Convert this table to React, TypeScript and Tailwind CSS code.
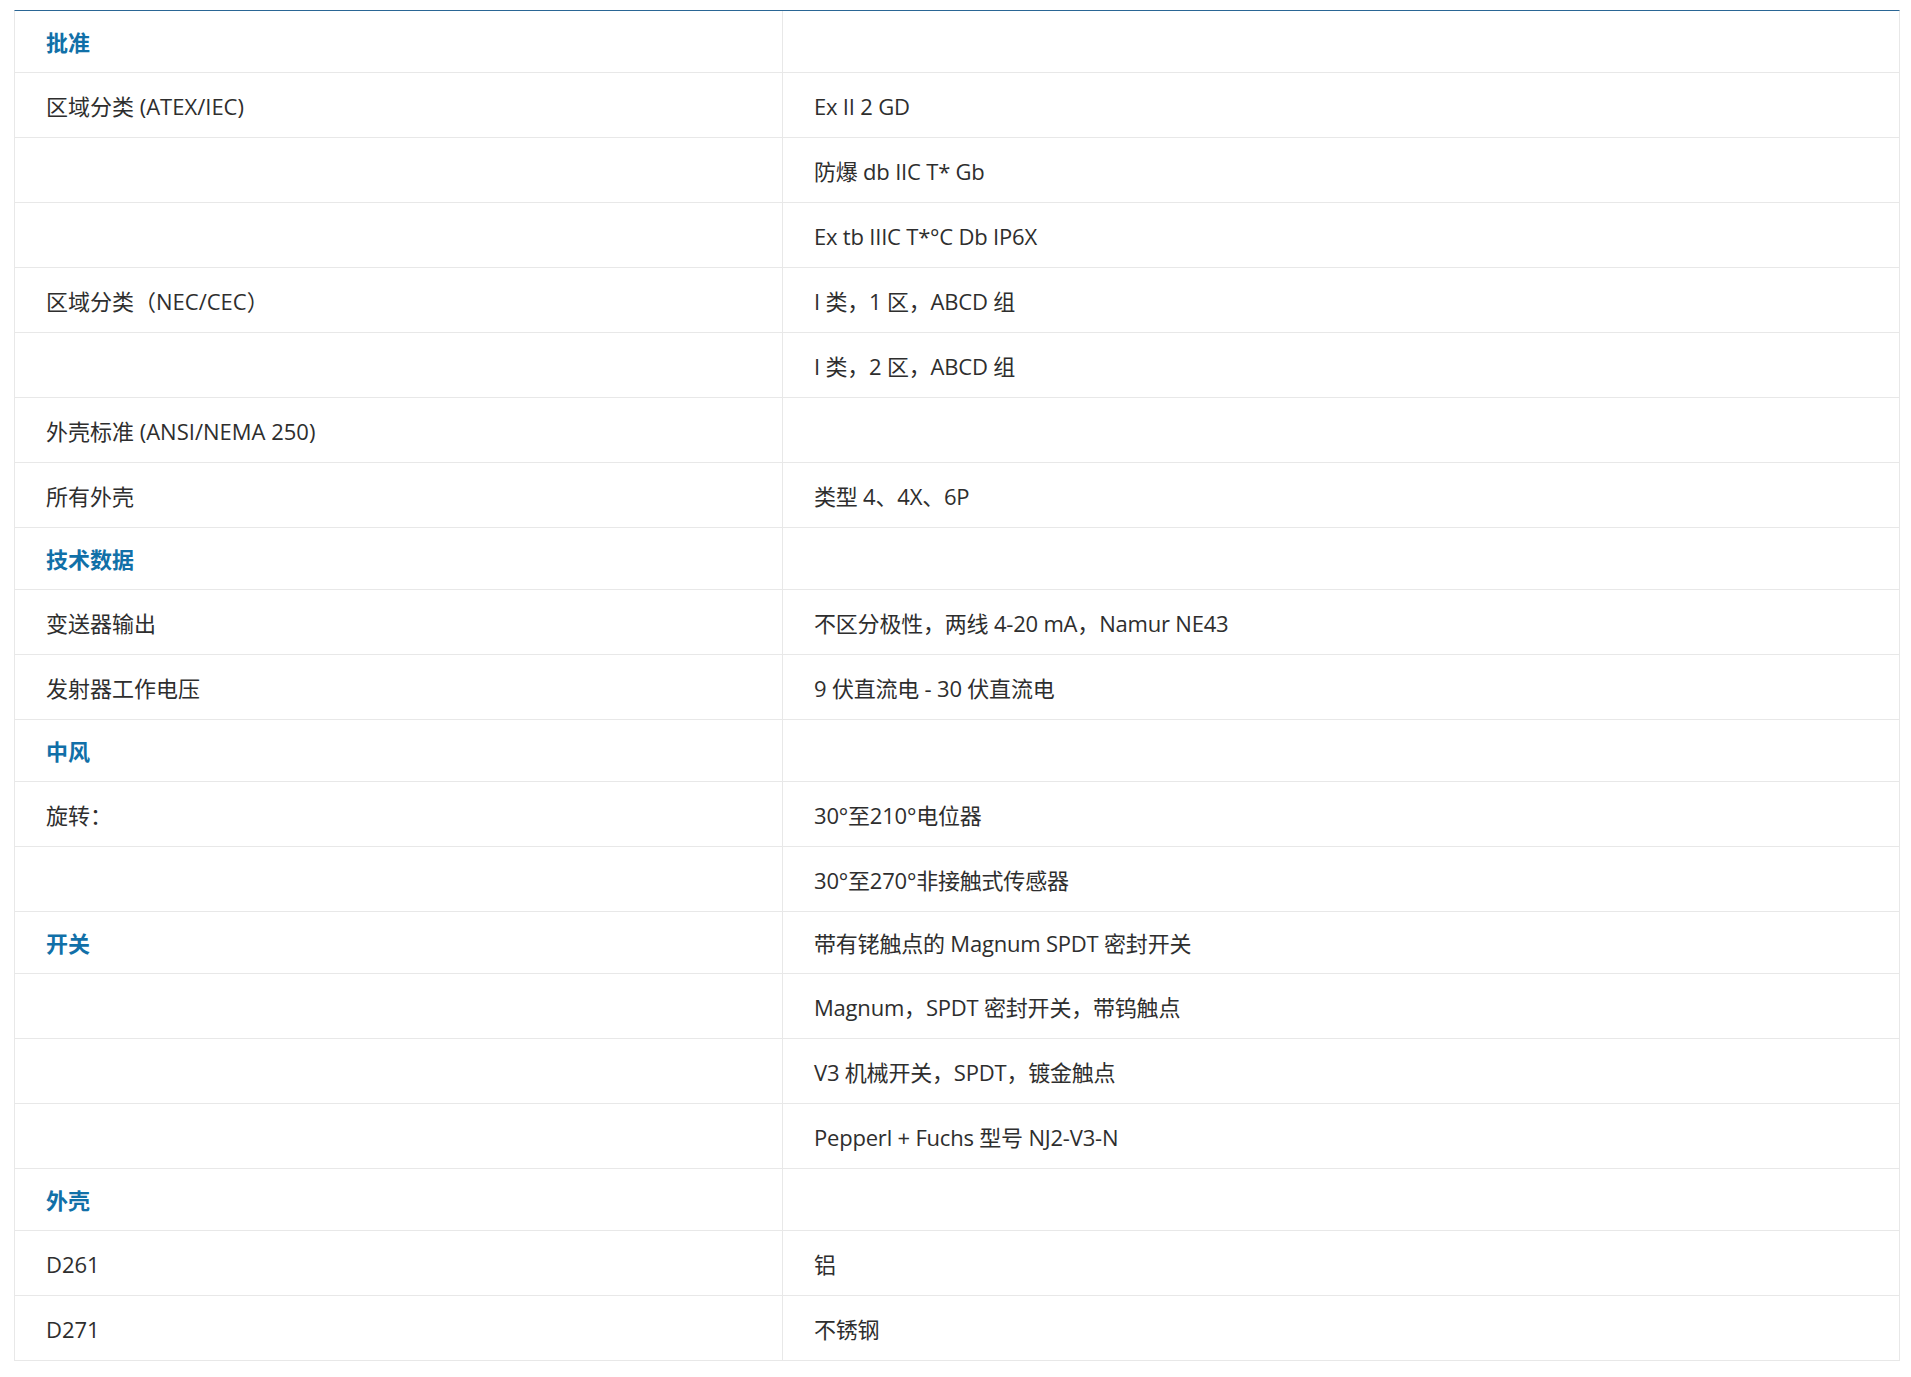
import React from 'react';

type Row = { label?: string; value?: string; heading?: boolean };

// spec rows, in the order they appear in the sheet
const rows: Row[] = [
    { label: '批准', heading: true },
    { label: '区域分类 (ATEX/IEC)', value: 'Ex II 2 GD' },
    { value: '防爆 db IIC T* Gb' },
    { value: 'Ex tb IIIC T*°C Db IP6X' },
    { label: '区域分类（NEC/CEC）', value: 'I 类，1 区，ABCD 组' },
    { value: 'I 类，2 区，ABCD 组' },
    { label: '外壳标准 (ANSI/NEMA 250)' },
    { label: '所有外壳', value: '类型 4、4X、6P' },
    { label: '技术数据', heading: true },
    { label: '变送器输出', value: '不区分极性，两线 4-20 mA，Namur NE43' },
    { label: '发射器工作电压', value: '9 伏直流电 - 30 伏直流电' },
    { label: '中风', heading: true },
    { label: '旋转：', value: '30°至210°电位器' },
    { value: '30°至270°非接触式传感器' },
    { label: '开关', value: '带有铑触点的 Magnum SPDT 密封开关', heading: true },
    { value: 'Magnum，SPDT 密封开关，带钨触点' },
    { value: 'V3 机械开关，SPDT，镀金触点' },
    { value: 'Pepperl + Fuchs 型号 NJ2-V3-N' },
    { label: '外壳', heading: true },
    { label: 'D261', value: '铝' },
    { label: 'D271', value: '不锈钢' },
];

const SpecRow: React.FC<{ row: Row }> = ({ row }) => {
    // heading rows are a little shorter than the data rows
    const height = row.heading ? 'h-[62px]' : 'h-[65px]';
    return (
        <div className={`grid grid-cols-[768px_1fr] border-b border-[#e8e8e8] ${height}`}>
            <div className="flex items-center border-r border-[#e8e8e8] pl-[31px] pt-[2px]">
                {row.heading ? (
                    <span className="font-bold text-[#1170a8]">{row.label}</span>
                ) : (
                    <span>{row.label}</span>
                )}
            </div>
            <div className="flex items-center pl-[31px] pt-[2px]">
                <span className="tracking-[-0.2px]">{row.value}</span>
            </div>
        </div>
    );
};

export default function App() {
    return (
        <div
            className="min-h-screen bg-white pt-[10px] pl-[14px] text-[22px] text-[#2e2e2e]"
            style={{ fontFamily: '"Open Sans", "Noto Sans CJK SC", sans-serif' }}
        >
            <div className="w-[1886px] border-t border-l border-r border-t-[#2a6695] border-l-[#e8e8e8] border-r-[#e8e8e8]">
                {rows.map((row, i) => (
                    <SpecRow key={i} row={row} />
                ))}
            </div>
        </div>
    );
}
